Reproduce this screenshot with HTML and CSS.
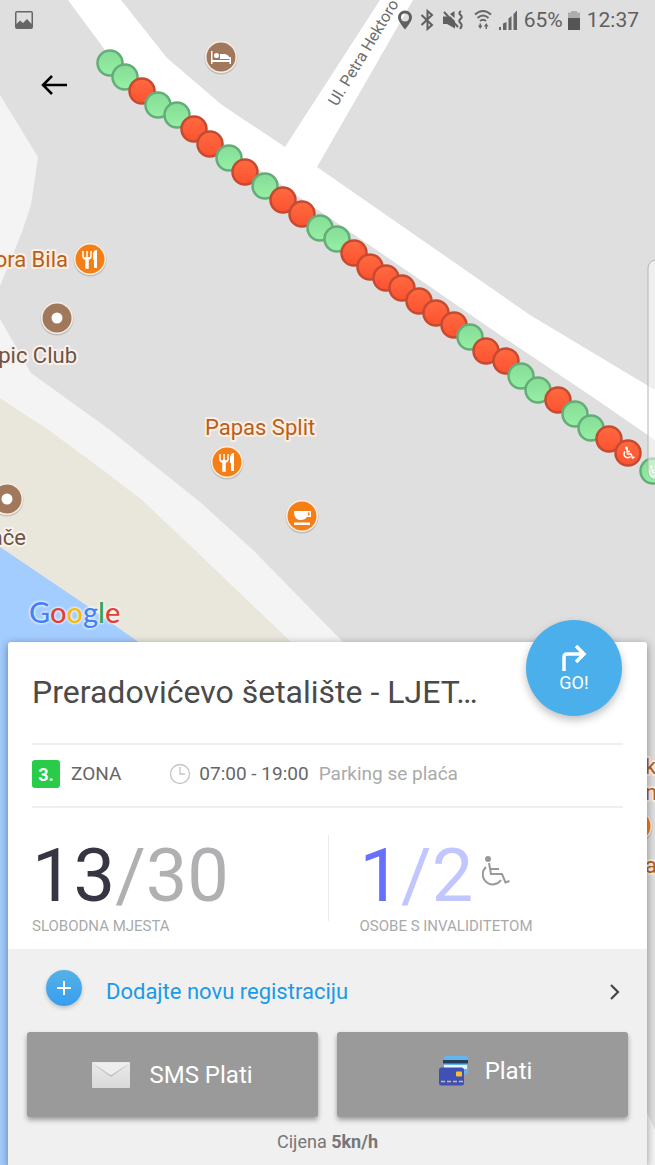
FILE: index.html
```html
<!DOCTYPE html>
<html lang="hr">
<head>
    <meta charset="UTF-8">
    <meta name="viewport" content="width=device-width, initial-scale=1.0">
    <title>Parking</title>
    <link rel="stylesheet" href="styles.css">
</head>
<body>
    <!-- Map -->
    <svg class="map" viewBox="0 0 655 1165" preserveAspectRatio="xMidYMid slice">
        <defs>
            <linearGradient id="free" x1="0" y1="0" x2="0" y2="1">
                <stop offset="0" stop-color="#86dc96"/>
                <stop offset="1" stop-color="#95f0a4"/>
            </linearGradient>
            <linearGradient id="taken" x1="0" y1="0" x2="0" y2="1">
                <stop offset="0" stop-color="#ff6a40"/>
                <stop offset="1" stop-color="#fc5230"/>
            </linearGradient>
            <symbol id="wheelchair" viewBox="0 0 28 33" overflow="visible">
                <circle cx="6" cy="4" r="3" fill="currentColor"/>
                <path d="M7 8L9 19H20L23.500 27.500L27.500 26M8 14H17M4 12A10 10 0 1 0 19 25" fill="none" stroke="currentColor" stroke-width="2"/>
            </symbol>
            <g id="s-free"><circle r="12.500" fill="url(#free)" stroke="#64ac78" stroke-width="2.500"/></g>
            <g id="s-taken"><circle r="12.500" fill="url(#taken)" stroke="#c54a30" stroke-width="2.500"/></g>
            <g id="food">
                <circle cy="1" r="16.500" fill="#000" opacity=".15"/>
                <circle r="16" fill="#ffeee0"/>
                <circle r="14.500" fill="#f57f17"/>
                <path d="M-7-8V-3Q-7 0-4 0V9H-2V0Q1 0 1-3V-8M-3-8V-1" fill="none" stroke="#fff" stroke-width="1.500"/>
                <path d="M-6-2H0L-2 1V9H-4V1Z" fill="#fff"/>
                <path d="M7-9V9H4V1H3V-4Q3-9 7-9Z" fill="#fff"/>
            </g>
            <g id="place">
                <circle cy="1" r="16.500" fill="#000" opacity=".15"/>
                <circle r="16" fill="#fbeee4"/>
                <circle r="14.500" fill="#a0785c"/>
                <circle r="5.500" fill="#fff"/>
            </g>
        </defs>

        <rect width="655" height="1165" fill="#dfdfdf"/>
        <path d="M0 95L38 157L31 205L22 232L0 286Z" fill="#f4f4f4"/>
        <path d="M0 319L31 373L110 430L200 502L253 550L342 641L420 720H0Z" fill="#f4f4f4"/>
        <path d="M0 398L50 431L103 470L142 500L197 552L290 641L360 710H0Z" fill="#e9e7dc"/>
        <path d="M0 547L83 603L137 641L240 712V1165H0Z" fill="#a3ccff"/>
        <path d="M640 1097L655 1130V1165H640Z" fill="#f4f4f4"/>
        <path d="M68 0H121L167 58L222 105L285 147L380 0H413L317 167L530 315L560 333L655 390V440L597 400L500 335L400 266L245 160L105 50Z" fill="#fff"/>

        <text class="street" transform="translate(337 107) rotate(-59)">Ul. Petra Hektoro</text>

        <!-- Parking spots -->
        <use href="#s-free" x="110" y="63"/>
        <use href="#s-free" x="125" y="77"/>
        <use href="#s-taken" x="142" y="91"/>
        <use href="#s-free" x="158" y="105"/>
        <use href="#s-free" x="177" y="115"/>
        <use href="#s-taken" x="194" y="129"/>
        <use href="#s-taken" x="210" y="144"/>
        <use href="#s-free" x="229" y="158"/>
        <use href="#s-taken" x="245" y="172"/>
        <use href="#s-free" x="265" y="186"/>
        <use href="#s-taken" x="283" y="200"/>
        <use href="#s-taken" x="302" y="214"/>
        <use href="#s-free" x="320" y="228"/>
        <use href="#s-free" x="337" y="239"/>
        <use href="#s-taken" x="354" y="253"/>
        <use href="#s-taken" x="370" y="267"/>
        <use href="#s-taken" x="386" y="278"/>
        <use href="#s-taken" x="402" y="288"/>
        <use href="#s-taken" x="419" y="301"/>
        <use href="#s-taken" x="436" y="313"/>
        <use href="#s-taken" x="454" y="325"/>
        <use href="#s-free" x="470" y="337"/>
        <use href="#s-taken" x="486" y="351"/>
        <use href="#s-taken" x="506" y="361"/>
        <use href="#s-free" x="521" y="376"/>
        <use href="#s-free" x="538" y="390"/>
        <use href="#s-taken" x="558" y="400"/>
        <use href="#s-free" x="575" y="414"/>
        <use href="#s-free" x="591" y="428"/>
        <use href="#s-taken" x="609" y="439"/>
        <use href="#s-taken" x="628" y="453"/>
        <g class="spot-icon">
            <circle cx="626.500" cy="448" r="1.500" fill="currentColor"/>
            <path d="M627 449L627.500 454H631L632.500 458L634.500 457M627 451.500H630M625 451.500A3.500 3.500 0 1 0 630.500 456.500" fill="none" stroke="currentColor" stroke-width="1.500"/>
        </g>
        <use href="#s-free" x="653" y="471"/>
        <use class="spot-icon" href="#wheelchair" x="649" y="465" width="11" height="13"/>

        <!-- Places -->
        <g transform="translate(221 57)">
            <circle cy="1" r="16.500" fill="#000" opacity=".15"/>
            <circle r="16" fill="#fbeee4"/>
            <circle r="14.500" fill="#a0785c"/>
            <path d="M-10-6H-8.500V3H8.500V0H10V7H8.500V5H-8.500V7H-10ZM-1-3H4Q8-2 8.500 1V2H-1ZM-7-1.500A2.500 2.500 0 1 1-2-1.500A2.500 2.500 0 1 1-7-1.500Z" fill="#fff"/>
        </g>
        <use href="#food" x="90" y="259"/>
        <use href="#place" x="57" y="318"/>
        <use href="#place" x="7" y="499"/>
        <use href="#food" x="227" y="462"/>
        <use href="#food" x="636" y="826"/>
        <g transform="translate(302 516)">
            <circle cy="1" r="16.500" fill="#000" opacity=".15"/>
            <circle r="16" fill="#ffeee0"/>
            <circle r="14.500" fill="#f57f17"/>
            <path d="M-8-5H9V1H5Q3 4 0 4H-3Q-8 3-8-5ZM6-3.500V-.5H7.500V-3.500ZM-8 6.500H8V9H-8Z" fill="#fff" fill-rule="evenodd"/>
        </g>
        <text class="label food" x="68" y="267" text-anchor="end">ora Bila</text>
        <text class="label" x="77" y="363" text-anchor="end">pic Club</text>
        <text class="label" x="26" y="545" text-anchor="end">ače</text>
        <text class="label food" x="205" y="435">Papas Split</text>
        <text class="label food" x="645" y="774">k</text>
        <text class="label food" x="645" y="800">n</text>
        <text class="label food" x="645" y="873">a</text>
        <rect x="648" y="260" width="20" height="220" rx="8" fill="#fff" fill-opacity=".5" stroke="#b5b5b5"/>
    </svg>

    <!-- Status bar -->
    <div class="status">
        <svg class="status-photo" width="20" height="20" viewBox="0 0 20 20">
            <path d="M3 1H17Q19 1 19 3V17Q19 19 17 19H3Q1 19 1 17V3Q1 1 3 1ZM2.500 2.500V14L6 10.500L9 13L13 9L17.500 14V2.500Z" fill="#666" fill-rule="evenodd"/>
        </svg>
        <svg class="status-icons" width="124" height="22" viewBox="396 8 124 22">
            <path d="M405 9.500A7 7 0 0 1 412 16.500Q412 20 405 28.500Q398 20 398 16.500A7 7 0 0 1 405 9.500ZM405 12.500A4 4 0 1 0 405 20.500A4 4 0 1 0 405 12.500Z" fill="#5f5f5f" fill-rule="evenodd"/>
            <path d="M421.500 14L432 24L427.500 28V10L432 14L421.500 24" fill="none" stroke="#5f5f5f" stroke-width="2"/>
            <path d="M443 15.500H447L450 18V15L455 20V27.500L447 23H443ZM450 13L454.500 10V17Z" fill="#5f5f5f"/>
            <path d="M444 11L458 26" stroke="#5f5f5f" stroke-width="2"/>
            <path d="M461 10Q458 12 460.500 14Q463 16 460.500 18Q458 20 460.500 22Q463 24 460 28" fill="none" stroke="#5f5f5f" stroke-width="2"/>
            <path d="M475 13.500Q483 6.500 491 13.500M477.500 17Q483 12 488.500 17M480 20Q483 17.500 486 20" fill="none" stroke="#666" stroke-width="2"/>
            <path d="M478 24.500H482.500L480.200 28ZM479.500 22.500H481V25H479.500ZM484 25.500L486.200 22L488.500 25.500ZM485.500 25H487V28H485.500Z" fill="#666"/>
            <path d="M499 26H501V29H499ZM503 22.500L506.500 21V29H503ZM508.500 17.500L511.500 15V29H508.500ZM513.500 13L517 9.500V29H513.500Z" fill="#666"/>
        </svg>
        <span class="battery">65%</span>
        <svg width="14" height="20" viewBox="0 0 14 20">
            <path d="M4 1H10V2.500H13V8H1V2.500H4Z" fill="#adadad"/>
            <path d="M1 8H13V20H1Z" fill="#555"/>
        </svg>
        <span class="clock">12:37</span>
    </div>

    <button class="back" aria-label="Natrag">
        <svg width="26" height="20" viewBox="0 0 26 20">
            <path d="M11 1L2 10L11 19M2 10H26" fill="none" stroke="#000" stroke-width="2.500"/>
        </svg>
    </button>

    <div class="google"><span class="blue">G</span><span class="red">o</span><span class="yellow">o</span><span class="blue">g</span><span class="green">l</span><span class="red">e</span></div>

    <!-- Parking details -->
    <main class="sheet">
        <button class="go">
            <svg width="26" height="28" viewBox="0 0 26 28">
                <path d="M3 27V13Q3 10 6 10H23M15 2L23 10L15 18" fill="none" stroke="#fff" stroke-width="3.500"/>
            </svg>
            GO!
        </button>

        <div class="details">
            <h1>Preradovićevo šetalište - LJET…</h1>

            <div class="zone">
                <span class="zone-number">3.</span>
                <span class="zone-name">ZONA</span>
                <svg width="22" height="22" viewBox="0 0 22 22">
                    <circle cx="11" cy="11" r="9.500" fill="none" stroke="#c4c4c4" stroke-width="1.300"/>
                    <path d="M11 4V11H16" fill="none" stroke="#c4c4c4" stroke-width="1.300"/>
                </svg>
                <span class="hours">07:00 - 19:00</span>
                <span class="note">Parking se plaća</span>
            </div>

            <div class="stats">
                <div class="stat">
                    <p class="count">13<span>/30</span></p>
                    <p class="caption">SLOBODNA MJESTA</p>
                </div>
                <div class="stat disabled">
                    <p class="count">1<span>/2</span>
                        <svg width="28" height="33"><use href="#wheelchair"/></svg>
                    </p>
                    <p class="caption">OSOBE S INVALIDITETOM</p>
                </div>
            </div>
        </div>

        <div class="payment">
            <a class="add" href="#">
                <span class="plus">
                    <svg width="14" height="14" viewBox="0 0 14 14">
                        <path d="M7 0V14M0 7H14" stroke="#fff" stroke-width="2"/>
                    </svg>
                </span>
                <span class="add-text">Dodajte novu registraciju</span>
                <svg width="10" height="16" viewBox="0 0 10 16">
                    <path d="M1 1L8 8L1 15" fill="none" stroke="#444" stroke-width="2.200"/>
                </svg>
            </a>

            <div class="buttons">
                <button>
                    <svg width="38" height="26" viewBox="0 0 38 26">
                        <defs>
                            <linearGradient id="paper" x1="0" y1="0" x2="0" y2="1">
                                <stop offset="0" stop-color="#e9e9e9"/>
                                <stop offset="1" stop-color="#dadada"/>
                            </linearGradient>
                        </defs>
                        <rect width="38" height="26" rx="1" fill="url(#paper)"/>
                        <path d="M1 2L19 15L37 2L21 11Q19 12.500 17 11Z" fill="#c2c2c2"/>
                        <path d="M1 1H37L21 12Q19 13.500 17 12Z" fill="#eee"/>
                    </svg>
                    SMS Plati
                </button>
                <button class="card">
                    <svg width="30" height="30" viewBox="0 0 30 30">
                        <rect x="5" y="0" width="24" height="18" rx="2" fill="#64b5ef"/>
                        <path d="M4 4H29V7.500H4Z" fill="#26405a"/>
                        <path d="M5 9H28V13H5Z" fill="#e8f5fd"/>
                        <rect x="0" y="11.500" width="25" height="18" rx="2.500" fill="#3f51b5"/>
                        <rect x="17" y="15.500" width="6" height="5" rx="1" fill="#fbc02d"/>
                        <path d="M2 25.500H24" stroke="#dcbc70" stroke-width="1.500" stroke-dasharray="4 2"/>
                    </svg>
                    Plati
                </button>
            </div>

            <p class="price">Cijena <b>5kn/h</b></p>
        </div>
    </main>
</body>
</html>
```
FILE: styles.css
```css
* {
    margin: 0;
    padding: 0;
    box-sizing: border-box;
}
body {
    font-family: Roboto, sans-serif;
    min-height: 100vh;
    display: flex;
    flex-direction: column;
    position: relative;
    overflow-x: hidden;
}
button {
    font-family: inherit;
    border: none;
    cursor: pointer;
}
svg {
    display: block;
    flex-shrink: 0;
}

/* Map */
.map {
    position: absolute;
    top: 0;
    left: 0;
    width: 100%;
    height: 100%;
    z-index: -1;
}
.label {
    font-size: 22px;
    fill: #6b5548;
    stroke: #fbf1ea;
    stroke-width: 4px;
    stroke-linejoin: round;
    paint-order: stroke;
}
.label.food {
    fill: #b5601c;
    stroke: #fdeee2;
}
.street {
    font-size: 16px;
    fill: #6e6e6e;
}
.spot-icon {
    color: #fff;
}

/* Status bar */
.status {
    display: flex;
    align-items: center;
    height: 40px;
    padding: 0 16px 0 14px;
    font-size: 21px;
    color: #5f5f5f;
}
.status-icons {
    margin-left: auto;
}
.battery {
    margin: 0 4px;
}
.clock {
    margin-left: 6px;
}
.back {
    align-self: flex-start;
    margin: 27px 0 0 33px;
    padding: 8px;
    background: none;
}

.google {
    margin-top: auto;
    padding: 0 29px 10px;
    font-family: Lato, sans-serif;
    font-size: 29px;
    line-height: 40px;
    font-weight: 500;
    text-shadow: 0 0 3px #fff, 0 0 3px #fff;
}
.blue {
    color: #4382f0;
}
.red {
    color: #e04038;
}
.yellow {
    color: #f5bb0c;
}
.green {
    color: #34a453;
}

/* Bottom sheet */
.sheet {
    position: relative;
    margin: 0 8px;
    background-color: #fff;
    border-radius: 3px 3px 0 0;
    box-shadow: 0 2px 8px rgba(0, 0, 0, 0.4);
}
.go {
    position: absolute;
    top: -22px;
    right: 25px;
    width: 96px;
    height: 96px;
    border-radius: 50%;
    display: flex;
    flex-direction: column;
    align-items: center;
    justify-content: center;
    background-color: #4bafec;
    color: #fff;
    font-size: 18px;
    box-shadow: 0 4px 8px rgba(0, 0, 0, 0.25);
}
.details {
    padding: 0 24px;
}
h1 {
    padding-right: 120px;
    font-size: 32px;
    font-weight: normal;
    line-height: 101px;
    color: #4a4a4a;
    white-space: nowrap;
    border-bottom: 2px solid #efefef;
}
.zone {
    display: flex;
    align-items: center;
    height: 63px;
    padding-bottom: 4px;
    font-size: 19px;
    color: #666;
    border-bottom: 2px solid #efefef;
}
.zone-number {
    width: 28px;
    height: 28px;
    border-radius: 3px;
    background-color: #29cc49;
    color: #fff;
    font-size: 18px;
    font-weight: bold;
    line-height: 30px;
    text-align: center;
}
.zone-name {
    margin: 0 48px 0 11px;
}
.hours {
    margin: 0 10px 0 8px;
}
.note {
    color: #aaa;
}
.stats {
    display: grid;
    grid-template-columns: 1fr 1fr;
    padding: 27px 0 14px;
}
.count {
    display: flex;
    align-items: center;
    height: 82px;
    font-size: 74px;
    line-height: 82px;
    color: #363642;
}
.count span {
    color: #b0b0b3;
}
.count svg {
    margin: 0 0 10px 9px;
    color: #999;
}
.caption {
    font-size: 15px;
    line-height: 18px;
    color: #aaa;
}
.disabled {
    padding-left: 32px;
    background: linear-gradient(#ebebeb, #ebebeb) left top / 1px 86px no-repeat;
}
.disabled .count {
    color: #6670fc;
}
.disabled .count span {
    color: #c2c6ff;
}

/* Payment */
.payment {
    padding: 0 19px;
    background-color: #f0f0f0;
}
.add {
    display: flex;
    align-items: center;
    height: 83px;
    padding: 2px 8px 0 19px;
    color: #1a9ae8;
    font-size: 22px;
    text-decoration: none;
}
.plus {
    width: 36px;
    height: 36px;
    margin-bottom: 8px;
    border-radius: 50%;
    display: flex;
    align-items: center;
    justify-content: center;
    background: linear-gradient(#55b2e6, #389df0);
    box-shadow: 0 2px 4px rgba(0, 0, 0, 0.2);
}
.add-text {
    flex: 1;
    margin-left: 24px;
}
.buttons {
    display: grid;
    grid-template-columns: 1fr 1fr;
    gap: 19px;
}
.buttons button {
    display: flex;
    align-items: center;
    justify-content: center;
    gap: 19px;
    height: 85px;
    border-radius: 3px;
    background-color: #9a9a9a;
    color: #fff;
    font-size: 24px;
    box-shadow: 0 3px 5px rgba(0, 0, 0, 0.35);
}
.buttons .card {
    gap: 16px;
    padding: 0 0 8px 6px;
}
.price {
    line-height: 50px;
    height: 48px;
    font-size: 18px;
    text-align: center;
    color: #777;
}
```
